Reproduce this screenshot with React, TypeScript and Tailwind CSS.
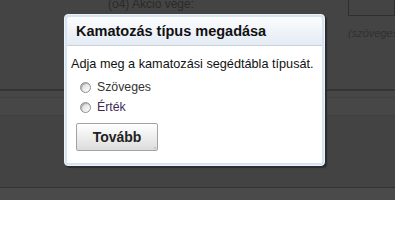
import React from "react";

const font = { fontFamily: '"Liberation Sans", Arial, sans-serif' };

// Small XP-style radio circle
const Radio: React.FC = () => (
  <span className="inline-block w-[11px] h-[11px] rounded-full border border-[#8f8f8f] bg-gradient-to-br from-[#d8d8d8] to-white shadow-[inset_1px_1px_1px_rgba(0,0,0,0.25)]" />
);

const App: React.FC = () => {
  return (
    <div className="relative w-[395px] h-[200px] overflow-hidden bg-[#444444]" style={font}>
      {/* Background page */}
      <div className="flex flex-col h-full">
        <div className="h-[89px] flex flex-row">
          <div className="w-[108px]" />
          <div className="flex-1 -mt-[2px] text-[12px] text-[#2a2a2a] leading-none whitespace-nowrap">
            (o4) Akció vége:
          </div>
          <div className="w-[47px] flex flex-col">
            <div className="h-[17px] -mt-[1px] border border-[#2f2f2f]" />
            <div className="mt-[12px] text-[11px] italic text-[#303030] leading-none whitespace-nowrap">
              (szöveges
            </div>
          </div>
        </div>
        <div className="h-[2px] bg-[#353535]" />
        <div className="h-[7px] bg-[#474747] border-b border-[#404040]" />
        <div className="h-[18px] bg-[#474747] border-b border-[#3e3e3e]" />
        <div className="flex-1 bg-[#434343]" />
        <div className="h-[1px] bg-[#333333]" />
        <div className="h-[12px] bg-[#4a4a4a]" />
      </div>

      {/* Dialog */}
      <div className="absolute left-[64px] top-[14px] w-[261px] h-[152px] rounded-[4px] bg-[#d6e3f2] border border-[#eef3f9] p-[2px] shadow-[2px_2px_1px_#2c2c2c] flex flex-col">
        <div className="h-[29px] rounded-t-[2px] bg-gradient-to-b from-[#fcfdfe] to-[#e4ebf4] border-b border-[#c9d3de] flex items-center pl-[9px] pt-[2px]">
          <span className="text-[14.5px] font-bold text-[#111111] whitespace-nowrap">Kamatozás típus megadása</span>
        </div>
        <div className="flex-1 bg-white flex flex-col pl-[4px] pt-[11px]">
          <div className="text-[12.7px] text-[#111111] leading-[14px] whitespace-nowrap">
            Adja meg a kamatozási segédtábla típusát.
          </div>
          <div className="flex flex-col gap-[7px] mt-[10px] pl-[9px]">
            <label className="flex items-center gap-[6px] h-[13px] text-[12.3px] text-[#333333]">
              <Radio />
              Szöveges
            </label>
            <label className="flex items-center gap-[6px] h-[13px] text-[12.3px] text-[#3d2b58]">
              <Radio />
              Érték
            </label>
          </div>
          <div className="mt-[9px] pl-[5px]">
            <button className="relative w-[82px] h-[28px] border border-[#a3a3a3] rounded-[2px] bg-gradient-to-b from-white to-[#dcdcdc] text-[14px] font-bold text-[#222222]">
              Tovább
              <span className="absolute right-[1px] bottom-[1px] w-[2px] h-[2px] bg-[#c8c8c8]" />
            </button>
          </div>
        </div>
      </div>
    </div>
  );
};

export default App;
